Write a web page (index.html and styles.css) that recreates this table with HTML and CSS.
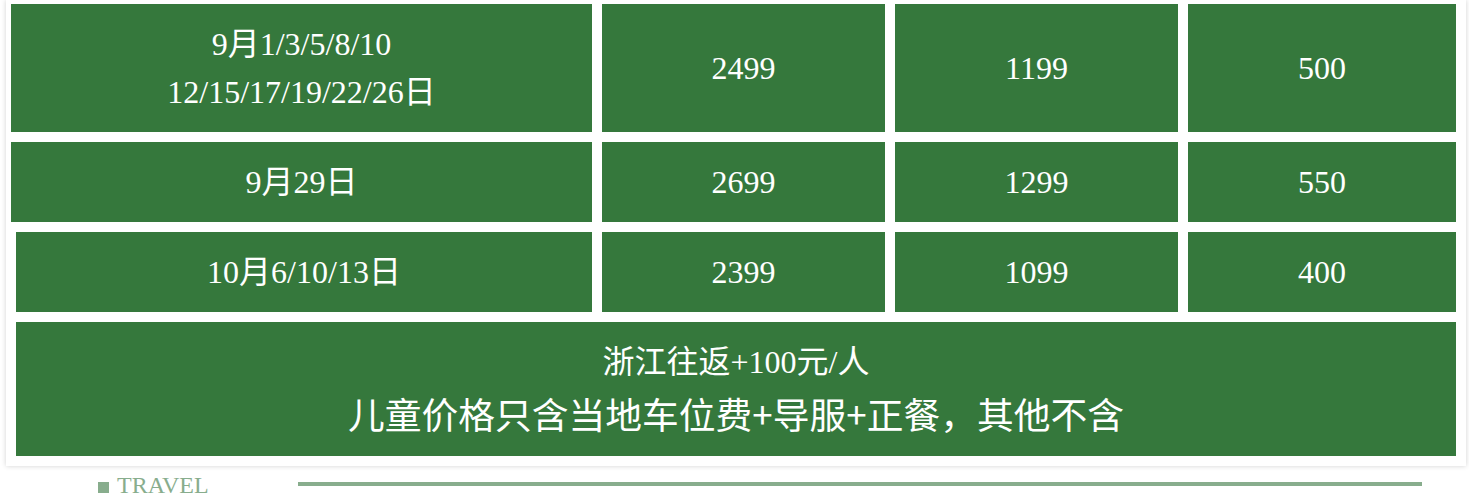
FILE: index.html
```html
<!DOCTYPE html>
<html lang="zh">
<head>
<meta charset="utf-8">
<title>价格表</title>
<link rel="stylesheet" href="styles.css">
</head>
<body>
<div class="panel">
  <div class="row row-wide">
    <div class="cell c1"><div>9月1/3/5/8/10<br>12/15/17/19/22/26日</div></div>
    <div class="cell c2">2499</div>
    <div class="cell c3">1199</div>
    <div class="cell c4">500</div>
  </div>
  <div class="row row-wide">
    <div class="cell c1">9月29日</div>
    <div class="cell c2">2699</div>
    <div class="cell c3">1299</div>
    <div class="cell c4">550</div>
  </div>
  <div class="row">
    <div class="cell c1">10月6/10/13日</div>
    <div class="cell c2">2399</div>
    <div class="cell c3">1099</div>
    <div class="cell c4">400</div>
  </div>
  <div class="row row-last">
    <div class="cell full">
      <div class="note1">浙江往返+100元/人</div>
      <div class="note2">儿童价格只含当地车位费+导服+正餐，其他不含</div>
    </div>
  </div>
</div>
<div class="footer">
  <div class="label"><span class="square"></span><span class="label-text">TRAVEL</span></div>
  <div class="rule"></div>
</div>
</body>
</html>
```
FILE: styles.css
```css
html, body {
  margin: 0;
  padding: 0;
  background: #ffffff;
}
body {
  width: 1469px;
  height: 495px;
  overflow: hidden;
  font-family: "Liberation Serif", "Noto Sans CJK SC", serif;
}
.panel {
  margin-left: 6px;
  width: 1460px;
  box-sizing: border-box;
  padding: 4px 10px 10px 10px;
  background: #ffffff;
  box-shadow: 0 0 5px rgba(0, 0, 0, 0.18);
}
.row {
  display: flex;
  gap: 10px;
  margin-bottom: 10px;
}
.row-wide {
  margin-left: -5px;
}
.row-last {
  margin-bottom: 0;
}
.cell {
  background: #35783c;
  color: #ffffff;
  font-size: 32px;
  line-height: 48px;
  text-align: center;
  padding: 16px 0;
  box-sizing: border-box;
  display: flex;
  flex-direction: column;
  justify-content: center;
  align-items: center;
}
.c1 { flex: 1 1 auto; }
.c2 { flex: 0 0 283px; }
.c3 { flex: 0 0 283px; }
.c4 { flex: 0 0 268px; }
.full { flex: 1 1 auto; }
.note1 {
  font-size: 32px;
  line-height: 48px;
}
.note2 {
  font-family: "Noto Sans CJK SC", sans-serif;
  font-size: 36.75px;
  line-height: 54px;
}
.footer {
  display: flex;
  align-items: flex-start;
  margin-top: 6px;
}
.label {
  width: 200px;
  margin-left: 98px;
  display: flex;
  align-items: baseline;
  color: #88ad8d;
  font-size: 24px;
}
.square {
  display: inline-block;
  width: 11px;
  height: 11px;
  background: #88ad8d;
  margin-right: 8px;
}
.rule {
  flex: 0 0 1124px;
  height: 4px;
  margin-top: 10px;
  background: #88ad8d;
}
```
